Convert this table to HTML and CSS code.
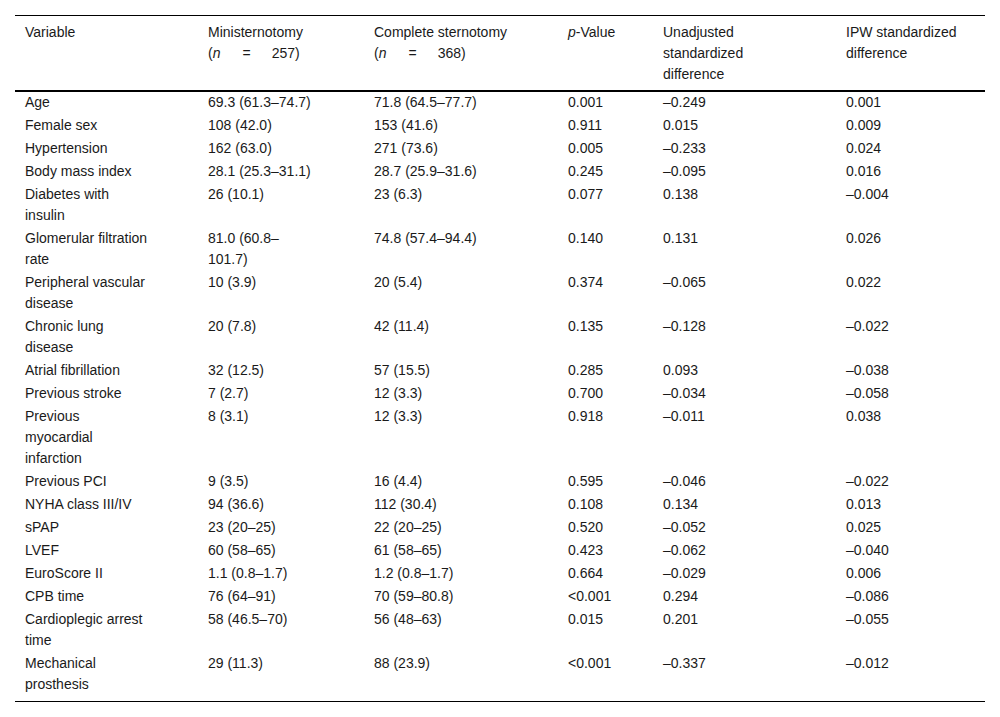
FILE: index.html
```html
<!DOCTYPE html>
<html lang="en">
<head>
<meta charset="utf-8">
<title>Baseline characteristics</title>
<link rel="stylesheet" href="styles.css">
</head>
<body>
<div class="page">
<table class="data">
<colgroup>
<col class="c1"><col class="c2"><col class="c3"><col class="c4"><col class="c5"><col class="c6">
</colgroup>
<thead>
<tr>
<th>Variable</th>
<th>Ministernotomy <span class="nobr">(<i>n</i><span class="eq">=</span>257)</span></th>
<th>Complete sternotomy <span class="nobr">(<i>n</i><span class="eq">=</span>368)</span></th>
<th><i>p</i>-Value</th>
<th>Unadjusted standardized difference</th>
<th>IPW standardized difference</th>
</tr>
</thead>
<tbody>
<tr><td>Age</td><td>69.3 (61.3–74.7)</td><td>71.8 (64.5–77.7)</td><td>0.001</td><td>–0.249</td><td>0.001</td></tr>
<tr><td>Female sex</td><td>108 (42.0)</td><td>153 (41.6)</td><td>0.911</td><td>0.015</td><td>0.009</td></tr>
<tr><td>Hypertension</td><td>162 (63.0)</td><td>271 (73.6)</td><td>0.005</td><td>–0.233</td><td>0.024</td></tr>
<tr><td>Body mass index</td><td>28.1 (25.3–31.1)</td><td>28.7 (25.9–31.6)</td><td>0.245</td><td>–0.095</td><td>0.016</td></tr>
<tr><td>Diabetes with insulin</td><td>26 (10.1)</td><td>23 (6.3)</td><td>0.077</td><td>0.138</td><td>–0.004</td></tr>
<tr><td>Glomerular filtration rate</td><td>81.0 (60.8–101.7)</td><td>74.8 (57.4–94.4)</td><td>0.140</td><td>0.131</td><td>0.026</td></tr>
<tr><td>Peripheral vascular disease</td><td>10 (3.9)</td><td>20 (5.4)</td><td>0.374</td><td>–0.065</td><td>0.022</td></tr>
<tr><td>Chronic lung disease</td><td>20 (7.8)</td><td>42 (11.4)</td><td>0.135</td><td>–0.128</td><td>–0.022</td></tr>
<tr><td>Atrial fibrillation</td><td>32 (12.5)</td><td>57 (15.5)</td><td>0.285</td><td>0.093</td><td>–0.038</td></tr>
<tr><td>Previous stroke</td><td>7 (2.7)</td><td>12 (3.3)</td><td>0.700</td><td>–0.034</td><td>–0.058</td></tr>
<tr><td>Previous myocardial infarction</td><td>8 (3.1)</td><td>12 (3.3)</td><td>0.918</td><td>–0.011</td><td>0.038</td></tr>
<tr><td>Previous PCI</td><td>9 (3.5)</td><td>16 (4.4)</td><td>0.595</td><td>–0.046</td><td>–0.022</td></tr>
<tr><td>NYHA class III/IV</td><td>94 (36.6)</td><td>112 (30.4)</td><td>0.108</td><td>0.134</td><td>0.013</td></tr>
<tr><td>sPAP</td><td>23 (20–25)</td><td>22 (20–25)</td><td>0.520</td><td>–0.052</td><td>0.025</td></tr>
<tr><td>LVEF</td><td>60 (58–65)</td><td>61 (58–65)</td><td>0.423</td><td>–0.062</td><td>–0.040</td></tr>
<tr><td>EuroScore II</td><td>1.1 (0.8–1.7)</td><td>1.2 (0.8–1.7)</td><td>0.664</td><td>–0.029</td><td>0.006</td></tr>
<tr><td>CPB time</td><td>76 (64–91)</td><td>70 (59–80.8)</td><td>&lt;0.001</td><td>0.294</td><td>–0.086</td></tr>
<tr><td>Cardioplegic arrest time</td><td>58 (46.5–70)</td><td>56 (48–63)</td><td>0.015</td><td>0.201</td><td>–0.055</td></tr>
<tr><td>Mechanical prosthesis</td><td>29 (11.3)</td><td>88 (23.9)</td><td>&lt;0.001</td><td>–0.337</td><td>–0.012</td></tr>
</tbody>
</table>
</div>
</body>
</html>
```

FILE: styles.css
```css
html, body {
  margin: 0;
  padding: 0;
  background: #ffffff;
}

.page {
  padding: 15px 15px 0 15px;
}

.data {
  width: 970px;
  table-layout: fixed;
  border-collapse: collapse;
  font-family: "Liberation Sans", Arial, sans-serif;
  font-size: 14px;
  line-height: 21px;
  color: #1a1a1a;
  border-top: 1px solid #000;
  border-bottom: 1px solid #000;
}

.c1 { width: 184px; }
.c2 { width: 166px; }
.c3 { width: 194px; }
.c4 { width: 95px; }
.c5 { width: 183px; }
.c6 { width: 148px; }

.data th,
.data td {
  text-align: left;
  vertical-align: top;
  font-weight: normal;
  padding: 0 8px 2px 9px;
}

.data th {
  padding-top: 6px;
  padding-bottom: 5px;
}

.data thead tr {
  border-bottom: 2px solid #000;
}

.nobr {
  white-space: nowrap;
}

.eq {
  display: inline-block;
  margin: 0 21px 0 22px;
}

.data th:nth-child(1),
.data td:nth-child(1) {
  padding-left: 10px;
  padding-right: 50px;
}

.data th:nth-child(2),
.data td:nth-child(2) {
  padding-right: 51px;
}

.data th:nth-child(3),
.data td:nth-child(3) {
  padding-right: 40px;
}

.data th:nth-child(5),
.data td:nth-child(5) {
  padding-right: 51px;
}

.data tbody tr:last-child td {
  padding-bottom: 6px;
}
```
